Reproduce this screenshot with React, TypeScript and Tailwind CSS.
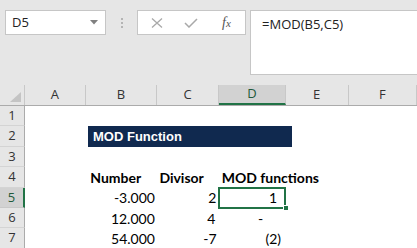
import React from "react";

type Cell = { text?: string; bold?: boolean; align?: "left" | "right"; pad?: string };

const COLS = [
  { key: "A", w: "w-[63px]" },
  { key: "B", w: "w-[72px]" },
  { key: "C", w: "w-[64px]" },
  { key: "D", w: "w-[68px]" },
  { key: "E", w: "w-[64px]" },
  { key: "F", w: "w-[70px]" },
];

const ROWS: { n: number; cells: Record<string, Cell> }[] = [
  { n: 1, cells: {} },
  { n: 2, cells: {} },
  { n: 3, cells: {} },
  {
    n: 4,
    cells: {
      B: { text: "Number", bold: true, align: "left", pad: "pl-[4px]" },
      C: { text: "Divisor", bold: true, align: "left", pad: "pl-[3px]" },
      D: { text: "MOD functions", bold: true, align: "left", pad: "pl-[3px]" },
    },
  },
  {
    n: 5,
    cells: {
      B: { text: "-3.000", align: "right", pad: "pr-[2px]" },
      C: { text: "2", align: "right", pad: "pr-[3px]" },
      D: { text: "1", align: "right", pad: "pr-[9px]" },
    },
  },
  {
    n: 6,
    cells: {
      B: { text: "12.000", align: "right", pad: "pr-[2px]" },
      C: { text: "4", align: "right", pad: "pr-[4px]" },
      D: { text: "-", align: "right", pad: "pr-[23px]" },
    },
  },
  {
    n: 7,
    cells: {
      B: { text: "54.000", align: "right", pad: "pr-[2px]" },
      C: { text: "-7", align: "right", pad: "pr-[3px]" },
      D: { text: "(2)", align: "right", pad: "pr-[5px]" },
    },
  },
];

function FormulaBar() {
  return (
    <div className="flex h-[85px] items-start pl-[5px] pt-[10px]">
      <div className="flex h-[25px] w-[101px] items-center justify-between border border-[#c6c6c6] bg-white pl-[6px] pr-[7px] text-[13px] text-[#222]">
        <span>D5</span>
        <svg width="8" height="5" viewBox="0 0 8 5">
          <path d="M0 0 H8 L4 4.5 Z" fill="#808080" />
        </svg>
      </div>
      <div className="flex h-[25px] w-[31px] flex-col items-center justify-center gap-[2px]">
        <span className="h-[2px] w-[2px] bg-[#b4b4b4]" />
        <span className="h-[2px] w-[2px] bg-[#b4b4b4]" />
        <span className="h-[2px] w-[2px] bg-[#b4b4b4]" />
      </div>
      <div className="flex h-[25px] w-[109px] items-center border border-[#c6c6c6] bg-white">
        <svg className="ml-[13px]" width="12" height="10" viewBox="0 0 12 10">
          <path d="M1 0.5 L11 9.5 M11 0.5 L1 9.5" stroke="#a9a9a9" strokeWidth="1.3" fill="none" />
        </svg>
        <svg className="ml-[21px]" width="14" height="10" viewBox="0 0 14 10">
          <path d="M1 5 L5 9 L13 1" stroke="#a9a9a9" strokeWidth="1.5" fill="none" />
        </svg>
        <span className="ml-[24px] font-['Liberation_Serif',serif] text-[14px] italic text-[#555]">
          f<span className="text-[11px]">x</span>
        </span>
      </div>
      <div className="ml-[4px] flex h-[65px] flex-1 items-start border border-r-0 border-[#c6c6c6] bg-white pl-[11px] pt-[4px] text-[13px] text-[#222]">
        =MOD(B5,C5)
      </div>
    </div>
  );
}

function ColumnHeaders() {
  return (
    <div className="flex h-[21px] border-b border-[#ababab]">
      <div className="flex w-[25px] items-end justify-end border-r border-[#c8c8c8] pb-[3px] pr-[3px]">
        <svg width="11" height="10" viewBox="0 0 11 10">
          <path d="M11 0 V10 H0 Z" fill="#c4c4c4" />
        </svg>
      </div>
      {COLS.map((c) => {
        const active = c.key === "D";
        return (
          <div
            key={c.key}
            className={`${c.w} flex items-center justify-center border-r text-[13px] ${
              active
                ? "border-[#c8c8c8] border-b-2 border-b-[#217346] bg-[#d2d2d2] text-[#225a3b]"
                : "border-[#c8c8c8] text-[#333]"
            }`}
          >
            {c.key}
          </div>
        );
      })}
    </div>
  );
}

function DataCell({ col, cell, selected }: { col: (typeof COLS)[number]; cell?: Cell; selected: boolean }) {
  return (
    <div
      className={`${col.w} relative flex items-center whitespace-nowrap font-['Lato',sans-serif] text-[14px] text-black ${
        cell?.align === "right" ? "justify-end" : "justify-start"
      } ${cell?.pad ?? ""} ${cell?.bold ? "font-bold" : ""}`}
    >
      {cell?.text}
      {selected ? (
        <>
          <div className="absolute -left-[1px] -top-[1px] bottom-[-1px] right-0 border-2 border-[#217346]" />
          <div className="absolute -bottom-[3px] -right-[3px] h-[6px] w-[6px] border border-white bg-[#217346]" />
        </>
      ) : null}
    </div>
  );
}

export default function App() {
  return (
    <div className="h-[248px] w-[417px] overflow-hidden bg-[#e6e6e6] font-['Open_Sans',sans-serif]">
      <FormulaBar />
      <ColumnHeaders />
      <div className="bg-white">
        {ROWS.map((r) => {
          const active = r.n === 5;
          return (
            <div key={r.n} className="flex h-[20.4px]">
              <div
                className={`flex w-[25px] shrink-0 items-center justify-center border-b border-r text-[13px] ${
                  active
                    ? "border-b-[#c8c8c8] border-r-2 border-r-[#217346] bg-[#d2d2d2] text-[#225a3b]"
                    : "border-b-[#d4d4d4] border-r-[#ababab] bg-[#e6e6e6] text-[#333]"
                }`}
              >
                {r.n}
              </div>
              {r.n === 2 ? (
                <>
                  <div className="w-[63px] shrink-0" />
                  <div className="flex w-[204px] shrink-0 items-center bg-[#10294f] pl-[5px] font-['Liberation_Sans',sans-serif] text-[13px] font-bold text-white">
                    MOD Function
                  </div>
                  <div className="w-[64px] shrink-0" />
                  <div className="w-[70px] shrink-0" />
                </>
              ) : (
                COLS.map((c) => (
                  <DataCell key={c.key} col={c} cell={r.cells[c.key]} selected={active && c.key === "D"} />
                ))
              )}
            </div>
          );
        })}
      </div>
    </div>
  );
}
